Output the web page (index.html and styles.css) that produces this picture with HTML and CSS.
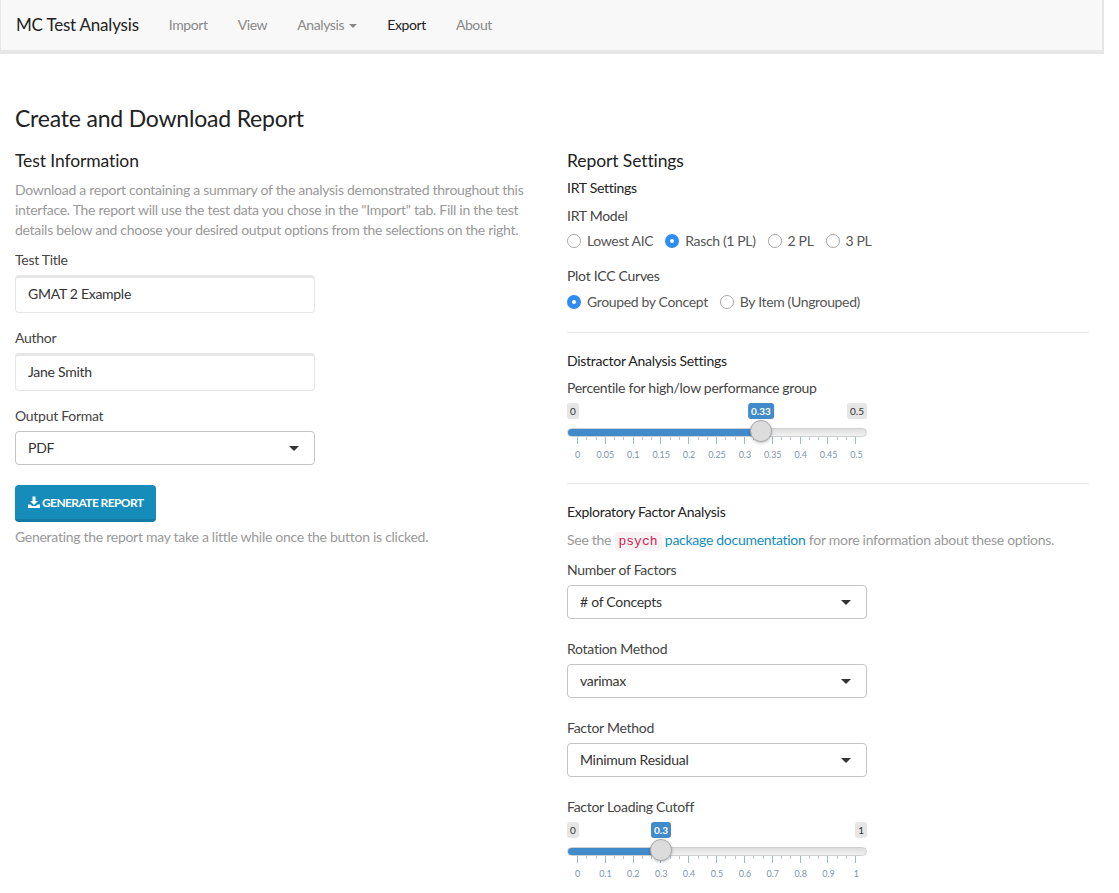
FILE: index.html
```html
<!DOCTYPE html>
<html lang="en">
<head>
	<meta charset="utf-8">
	<title>MC Test Analysis</title>
	<link rel="stylesheet" href="styles.css">
</head>
<body>
	<div class="page">
		<!-- Navbar -->
		<nav class="navbar">
			<span class="brand">MC Test Analysis</span>
			<a class="nav-link">Import</a>
			<a class="nav-link">View</a>
			<a class="nav-link">Analysis <span class="nav-caret"></span></a>
			<a class="nav-link active">Export</a>
			<a class="nav-link">About</a>
		</nav>

		<h2 class="page-title">Create and Download Report</h2>

		<div class="columns">
			<!-- Left column -->
			<div class="col">
				<h4 class="section-title">Test Information</h4>
				<p class="muted intro">Download a report containing a summary of the analysis demonstrated throughout this interface. The report will use the test data you chose in the "Import" tab. Fill in the test details below and choose your desired output options from the selections on the right.</p>

				<label class="field-label">Test Title</label>
				<div class="text-input">GMAT 2 Example</div>

				<label class="field-label second">Author</label>
				<div class="text-input">Jane Smith</div>

				<label class="field-label second">Output Format</label>
				<div class="select">PDF<span class="select-caret"></span></div>

				<button class="btn-generate">
					<svg viewBox="0 0 24 24" width="12" height="12" fill="#fff"><path d="M9 1h6v9h5l-8 8-8-8h5zM0 17h5l3 3h8l3-3h5v7H0z"/></svg>
					GENERATE REPORT
				</button>
				<p class="muted note">Generating the report may take a little while once the button is clicked.</p>
			</div>

			<!-- Right column -->
			<div class="col">
				<h4 class="section-title">Report Settings</h4>
				<h5 class="sub-title first">IRT Settings</h5>

				<label class="field-label top">IRT Model</label>
				<div class="radio-row">
					<span class="radio"><i class="dot"></i>Lowest AIC</span>
					<span class="radio"><i class="dot on"></i>Rasch (1 PL)</span>
					<span class="radio"><i class="dot"></i>2 PL</span>
					<span class="radio"><i class="dot"></i>3 PL</span>
				</div>

				<label class="field-label plot">Plot ICC Curves</label>
				<div class="radio-row">
					<span class="radio"><i class="dot on"></i>Grouped by Concept</span>
					<span class="radio"><i class="dot"></i>By Item (Ungrouped)</span>
				</div>

				<hr class="rule">

				<h5 class="sub-title">Distractor Analysis Settings</h5>
				<label class="field-label tight">Percentile for high/low performance group</label>
				<div class="slider">
					<div class="slider-ends"><span class="end">0</span><span class="end">0.5</span></div>
					<span class="bubble" style="left: 194px">0.33</span>
					<div class="track"><div class="track-fill" style="width: 194px"></div></div>
					<span class="thumb" style="left: 194px"></span>
					<div class="ticks"></div>
					<div class="tick-labels">
						<span>0</span><span>0.05</span><span>0.1</span><span>0.15</span><span>0.2</span><span>0.25</span><span>0.3</span><span>0.35</span><span>0.4</span><span>0.45</span><span>0.5</span>
					</div>
				</div>

				<hr class="rule lower">

				<h5 class="sub-title">Exploratory Factor Analysis</h5>
				<p class="muted see">See the <code class="code">psych</code> <a class="link">package documentation</a> for more information about these options.</p>

				<label class="field-label top">Number of Factors</label>
				<div class="select">&#35; of Concepts<span class="select-caret"></span></div>

				<label class="field-label next">Rotation Method</label>
				<div class="select">varimax<span class="select-caret"></span></div>

				<label class="field-label next">Factor Method</label>
				<div class="select">Minimum Residual<span class="select-caret"></span></div>

				<label class="field-label next">Factor Loading Cutoff</label>
				<div class="slider">
					<div class="slider-ends"><span class="end">0</span><span class="end">1</span></div>
					<span class="bubble" style="left: 94px">0.3</span>
					<div class="track"><div class="track-fill" style="width: 94px"></div></div>
					<span class="thumb" style="left: 94px"></span>
					<div class="ticks"></div>
					<div class="tick-labels">
						<span>0</span><span>0.1</span><span>0.2</span><span>0.3</span><span>0.4</span><span>0.5</span><span>0.6</span><span>0.7</span><span>0.8</span><span>0.9</span><span>1</span>
					</div>
				</div>
			</div>
		</div>
	</div>
</body>
</html>
```

FILE: styles.css
```css
/*Basic body design*/
body {
	font-family: "Lato", "Liberation Sans", sans-serif;
	font-size: 14px;
	line-height: 20px;
	letter-spacing: -0.28px;
	color: #444;
	background-color: #fff;
	margin: 0;
}

/*Page keeps the narrower width of the screenshot*/
.page {
	width: 1104px;
}

/*Navbar*/
.navbar {
	display: flex;
	align-items: center;
	box-sizing: border-box;
	height: 54px;
	padding-left: 15px;
	background-color: #f8f8f8;
	border: 2px solid #e7e7e7;
	border-width: 0 2px 4px 1px;
}

.brand {
	font-size: 17px;
	letter-spacing: -0.2px;
	color: #222;
	margin-right: 15px;
}

.nav-link {
	padding: 0 15px;
	letter-spacing: -0.4px;
	color: #888;
}

.nav-link.active {
	color: #222;
}

.nav-caret {
	display: inline-block;
	vertical-align: middle;
	margin-left: 2px;
	border-top: 4px solid #888;
	border-left: 4px solid transparent;
	border-right: 4px solid transparent;
}

/*Headings*/
.page-title {
	font-size: 23px;
	font-weight: 400;
	letter-spacing: -0.2px;
	line-height: 28px;
	color: #222;
	margin: 50px 15px 0;
}

.section-title {
	font-size: 17.5px;
	font-weight: 400;
	letter-spacing: -0.1px;
	line-height: 22px;
	color: #222;
	margin: 0;
}

.sub-title {
	font-size: 14px;
	font-weight: 400;
	line-height: 20px;
	color: #222;
	margin: 0;
}

.sub-title.first {
	margin-top: 6px;
}

/*Two columns*/
.columns {
	display: grid;
	grid-template-columns: 1fr 1fr;
	margin-top: 18px;
}

.col {
	padding: 0 15px;
}

.muted {
	color: #999;
	margin: 0;
}

.intro {
	margin-top: 8px;
}

.note {
	margin-top: 5px;
}

.see {
	margin-top: 8px;
}

/*Form fields*/
.field-label {
	display: block;
	color: #444;
	margin: 10px 0 5px;
}

.field-label.second {
	margin-top: 15px;
}

.field-label.top {
	margin-top: 8px;
}

.field-label.tight {
	margin: 7px 0 5px;
}

.field-label.plot {
	margin: 15px 0 6px;
}

.field-label.next {
	margin-top: 20px;
}

.text-input {
	box-sizing: border-box;
	width: 300px;
	height: 38px;
	padding: 6px 12px 0;
	line-height: 20px;
	color: #333;
	background-color: #fff;
	border: 1px solid #e6e6e6;
	border-top-width: 3px;
	border-radius: 4px;
}

.select {
	display: flex;
	align-items: center;
	justify-content: space-between;
	box-sizing: border-box;
	width: 300px;
	height: 34px;
	padding: 0 15px 0 12px;
	color: #333;
	background-color: #fff;
	border: 1px solid #c4c4c4;
	border-radius: 4px;
}

.select-caret {
	border-top: 5px solid #333;
	border-left: 5px solid transparent;
	border-right: 5px solid transparent;
}

.btn-generate {
	display: flex;
	align-items: center;
	gap: 2px;
	box-sizing: border-box;
	width: 141px;
	height: 37px;
	margin-top: 20px;
	padding: 0 0 0 13px;
	font-family: inherit;
	font-size: 12px;
	font-weight: 700;
	letter-spacing: -0.6px;
	color: #fff;
	background-color: #158cba;
	border: none;
	border-bottom: 3px solid #127ba3;
	border-radius: 4px;
}

/*Radio buttons*/
.radio-row {
	display: flex;
	gap: 12px;
	height: 20px;
}

.radio {
	display: flex;
	align-items: center;
	gap: 6px;
	letter-spacing: -0.35px;
	color: #555;
}

.dot {
	box-sizing: border-box;
	width: 14px;
	height: 14px;
	background-color: #fff;
	border: 1px solid #aaa;
	border-radius: 50%;
}

.dot.on {
	background-color: #fff;
	border: 5px solid #2f8cf0;
}

/*Separators*/
.rule {
	border: none;
	border-top: 1px solid #e7e7e7;
	margin: 20px 0 18px;
}

.rule.lower {
	margin: 22px 0 18px;
}

/*Code and links*/
.code {
	font-family: "Liberation Mono", monospace;
	font-size: 13px;
	letter-spacing: 0;
	color: #c7254e;
	background-color: #f9f2f4;
	border-radius: 4px;
	padding: 2px 4px;
}

.link {
	color: #158cba;
}

/*Slider*/
.slider {
	position: relative;
	width: 300px;
}

.slider-ends {
	display: flex;
	justify-content: space-between;
	height: 16px;
	margin-bottom: 9px;
}

.end {
	padding: 0 3px;
	font-size: 10px;
	letter-spacing: 0;
	line-height: 16px;
	color: #333;
	background-color: #e6e6e6;
	border-radius: 3px;
}

.bubble {
	position: absolute;
	top: 0;
	transform: translateX(-50%);
	padding: 0 3px;
	font-size: 10px;
	font-weight: 700;
	letter-spacing: 0;
	line-height: 16px;
	color: #fff;
	background-color: #428bca;
	border-radius: 3px;
}

.track {
	box-sizing: border-box;
	height: 9px;
	background: linear-gradient(#ddd, #f2f2f2);
	border: 1px solid #d0d0d0;
	border-radius: 5px;
	overflow: hidden;
}

.track-fill {
	height: 9px;
	margin: -1px 0 0 -1px;
	background-color: #428bca;
}

.thumb {
	position: absolute;
	top: 17px;
	box-sizing: border-box;
	width: 22px;
	height: 22px;
	margin-left: -11px;
	background-color: #dcdcdc;
	border: 1px solid #aaa;
	border-radius: 50%;
	box-shadow: 0 1px 3px rgba(0, 0, 0, 0.25);
}

/*Major ticks every 27.83px, minor ticks every third of that*/
.ticks {
	height: 7px;
	margin: 0 10px;
	background-image:
		repeating-linear-gradient(to right, #9db8d2 0, #9db8d2 1px, transparent 1px, transparent 27.83px),
		repeating-linear-gradient(to right, #b4c6d8 0, #b4c6d8 1px, transparent 1px, transparent 9.277px);
	background-size: 100% 7px, 100% 3px;
	background-repeat: no-repeat;
}

.tick-labels {
	display: flex;
	justify-content: space-between;
	margin: 5px 10.5px 0;
	font-size: 9px;
	letter-spacing: -0.05px;
	line-height: 12px;
	color: #7f95ad;
}

.tick-labels span {
	display: flex;
	justify-content: center;
	width: 0;
	white-space: nowrap;
}
```
